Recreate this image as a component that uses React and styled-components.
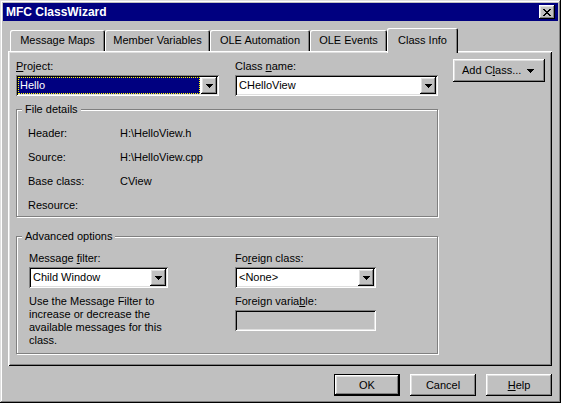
import React from 'react'
import styled, { createGlobalStyle, css } from 'styled-components'

const GlobalStyle = createGlobalStyle`
	html, body {
		margin: 0;
		padding: 0;
		background: #c0c0c0;
	}
	body {
		font-family: "Liberation Sans", Arial, sans-serif;
		font-size: 11px;
		color: #000;
	}
`

const raised = css`
	box-shadow: inset -1px -1px #000, inset 1px 1px #fff, inset -2px -2px #808080,
		inset 2px 2px #dfdfdf;
`

const sunken = css`
	box-shadow: inset 1px 1px #808080, inset -1px -1px #fff, inset 2px 2px #000,
		inset -2px -2px #dfdfdf;
`

const Window = styled.div`
	width: 561px;
	height: 403px;
	box-sizing: border-box;
	padding: 3px;
	display: flex;
	flex-direction: column;
	background: #c0c0c0;
	box-shadow: inset -1px -1px #000, inset 1px 1px #dfdfdf, inset -2px -2px #808080,
		inset 2px 2px #fff;
`

const TitleBar = styled.div`
	height: 18px;
	display: flex;
	align-items: center;
	justify-content: space-between;
	padding: 0 3px 0 3px;
	background: #000080;
	color: #fff;
`

const Title = styled.span`
	font-size: 12px;
	font-weight: bold;
	line-height: 18px;
`

const CloseButton = styled.div`
	width: 16px;
	height: 14px;
	display: grid;
	place-items: center;
	background: #c0c0c0;
	${raised}
	svg {
		margin: 0 1px 0 0;
	}
`

const Body = styled.div`
	display: flex;
	flex-direction: column;
	padding: 0 6px 0 5px;
`

const TabRow = styled.div`
	display: flex;
	align-items: flex-end;
	height: 23px;
	margin-top: 7px;
	padding-left: 2px;
`

const Tab = styled.div`
	position: relative;
	box-sizing: border-box;
	width: ${({ $w }) => $w}px;
	height: 21px;
	display: flex;
	align-items: center;
	justify-content: center;
	line-height: 13px;
	white-space: nowrap;
	border-radius: 2px 2px 0 0;
	box-shadow: inset 1px 1px #fff, inset -1px 0 #000, inset -2px 0 #808080;
	&[data-active] {
		height: 25px;
		margin-bottom: -2px;
		background: #c0c0c0;
		z-index: 1;
	}
`

const Panel = styled.div`
	box-sizing: border-box;
	width: 544px;
	height: 315px;
	display: flex;
	gap: 15px;
	padding: 8px 0 0 8px;
	box-shadow: inset 1px 1px #fff, inset -1px -1px #000, inset 2px 2px #dfdfdf,
		inset -2px -2px #808080;
`

const MainColumn = styled.div`
	width: 422px;
	display: flex;
	flex-direction: column;
`

const TopRow = styled.div`
	display: flex;
	gap: 16px;
`

const Field = styled.div`
	width: ${({ $w }) => $w}px;
	display: flex;
	flex-direction: column;
	padding-top: ${({ $top }) => $top || 0}px;
`

const Label = styled.div`
	line-height: 13px;
	margin-bottom: 2px;
	margin-top: ${({ $top }) => $top || 0}px;
	white-space: nowrap;
`

const Key = styled.span`
	text-decoration: underline;
	text-underline-offset: 1px;
`

const Combo = styled.div`
	box-sizing: border-box;
	height: 21px;
	display: flex;
	padding: 2px;
	background: #fff;
	${sunken}
`

const ComboValue = styled.div`
	flex: 1;
	line-height: 17px;
	padding-left: 2px;
	white-space: nowrap;
	overflow: hidden;
	&[data-selected] {
		background: #000080;
		color: #fff;
		outline: 1px dotted #ffff00;
		outline-offset: -1px;
		margin-right: 1px;
	}
`

const ComboButton = styled.div`
	width: 16px;
	height: 17px;
	display: grid;
	place-items: center;
	background: #c0c0c0;
	${raised}
`

const SideColumn = styled.div`
	display: flex;
	flex-direction: column;
`

const MenuButton = styled.div`
	box-sizing: border-box;
	width: 92px;
	height: 23px;
	display: flex;
	align-items: center;
	padding: 0 11px 0 9px;
	line-height: 13px;
	background: #c0c0c0;
	${raised}
	svg {
		margin-left: auto;
	}
`

const Group = styled.fieldset`
	box-sizing: border-box;
	min-width: 0;
	width: 100%;
	margin: ${({ $top }) => $top}px 0 0;
	padding: 0;
	border: 1px solid #808080;
	box-shadow: inset 1px 1px #fff, 1px 1px #fff;
`

const Legend = styled.legend`
	margin-left: 5px;
	padding: 0 3px 0 3px;
	line-height: 13px;
	background: #c0c0c0;
`

const Details = styled.div`
	display: grid;
	grid-template-columns: 92px 1fr;
	grid-auto-rows: 13px;
	row-gap: 11px;
	line-height: 13px;
	padding: 11px 0 4px 11px;
`

const Advanced = styled.div`
	display: flex;
	padding: 9px 0 6px 12px;
`

const HelpText = styled.p`
	width: 150px;
	margin: 7px 0 0;
	line-height: 13px;
`

const Edit = styled.div`
	box-sizing: border-box;
	height: 21px;
	background: #c0c0c0;
	${sunken}
`

const Footer = styled.div`
	display: flex;
	justify-content: flex-end;
	gap: 10px;
	margin-top: 8px;
`

const Button = styled.div`
	box-sizing: border-box;
	width: 66px;
	height: 22px;
	display: grid;
	place-items: center;
	line-height: 13px;
	background: #c0c0c0;
	${raised}
	&[data-default] {
		box-shadow: inset 0 0 0 1px #000, inset -2px -2px #000, inset 2px 2px #fff,
			inset -3px -3px #808080, inset 3px 3px #dfdfdf;
	}
`

const Arrow = () => (
	<svg width="7" height="4" viewBox="0 0 7 4" shapeRendering="crispEdges">
		<path d="M0 0h7v1H0zM1 1h5v1H1zM2 2h3v1H2zM3 3h1v1H3z" fill="#000" />
	</svg>
)

const CloseGlyph = () => (
	<svg width="8" height="7" viewBox="0 0 8 7" shapeRendering="crispEdges">
		<path
			d="M0 0h2v1H0zM6 0h2v1H6zM1 1h2v1H1zM5 1h2v1H5zM2 2h4v1H2zM3 3h2v1H3zM2 4h4v1H2zM1 5h2v1H1zM5 5h2v1H5zM0 6h2v1H0zM6 6h2v1H6z"
			fill="#000"
		/>
	</svg>
)

const DropDown = ({ value, selected }) => (
	<Combo>
		<ComboValue data-selected={selected || undefined}>{value}</ComboValue>
		<ComboButton>
			<Arrow />
		</ComboButton>
	</Combo>
)

const tabs = [
	{ label: 'Message Maps', w: 95 },
	{ label: 'Member Variables', w: 105 },
	{ label: 'OLE Automation', w: 100 },
	{ label: 'OLE Events', w: 77 },
	{ label: 'Class Info', w: 71, active: true },
]

const details = [
	['Header:', 'H:\\HelloView.h'],
	['Source:', 'H:\\HelloView.cpp'],
	['Base class:', 'CView'],
	['Resource:', ''],
]

export default function App() {
	return (
		<>
			<GlobalStyle />
			<Window>
				<TitleBar>
					<Title>MFC ClassWizard</Title>
					<CloseButton>
						<CloseGlyph />
					</CloseButton>
				</TitleBar>
				<Body>
					<TabRow>
						{tabs.map((t) => (
							<Tab key={t.label} $w={t.w} data-active={t.active || undefined}>
								{t.label}
							</Tab>
						))}
					</TabRow>
					<Panel>
						<MainColumn>
							<TopRow>
								<Field $w={203} $top={1}>
									<Label>
										<Key>P</Key>roject:
									</Label>
									<DropDown value="Hello" selected />
								</Field>
								<Field $w={203} $top={1}>
									<Label>
										Class <Key>n</Key>ame:
									</Label>
									<DropDown value="CHelloView" />
								</Field>
							</TopRow>
							<Group $top={7}>
								<Legend>File details</Legend>
								<Details>
									{details.map(([k, v]) => (
										<React.Fragment key={k}>
											<span>{k}</span>
											<span>{v}</span>
										</React.Fragment>
									))}
								</Details>
							</Group>
							<Group $top={13}>
								<Legend>Advanced options</Legend>
								<Advanced>
									<Field $w={206}>
										<Label>
											Message <Key>f</Key>ilter:
										</Label>
										<div style={{ width: 139 }}>
											<DropDown value="Child Window" />
										</div>
										<HelpText>
											Use the Message Filter to increase or decrease the available
											messages for this class.
										</HelpText>
									</Field>
									<Field $w={141}>
										<Label>
											Fo<Key>r</Key>eign class:
										</Label>
										<DropDown value="<None>" />
										<Label $top={7}>
											Foreign varia<Key>b</Key>le:
										</Label>
										<Edit />
									</Field>
								</Advanced>
							</Group>
						</MainColumn>
						<SideColumn>
							<MenuButton>
								Add C<Key>l</Key>ass...
								<Arrow />
							</MenuButton>
						</SideColumn>
					</Panel>
					<Footer>
						<Button data-default>OK</Button>
						<Button>Cancel</Button>
						<Button>
							<span>
								<Key>H</Key>elp
							</span>
						</Button>
					</Footer>
				</Body>
			</Window>
		</>
	)
}
